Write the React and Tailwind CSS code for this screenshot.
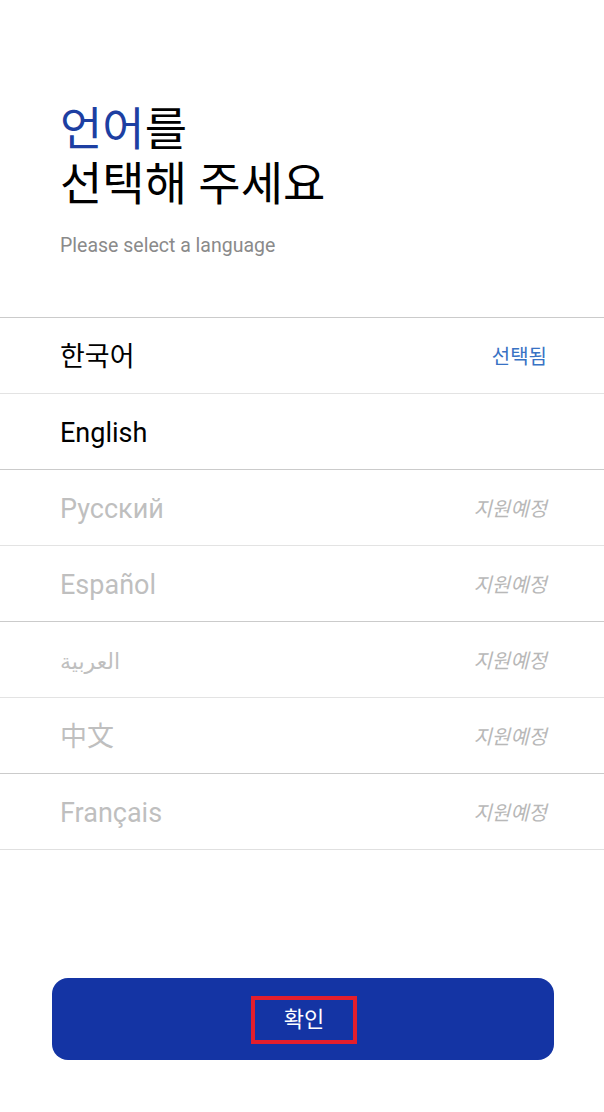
import React from "react";

const rows = [
  { label: "한국어", active: true, selected: true, top: "border-[#cbcbcb]" },
  { label: "English", active: true, top: "border-[#e3e3e3]" },
  { label: "Русский", top: "border-[#cbcbcb]" },
  { label: "Español", top: "border-[#e3e3e3]" },
  { label: "العربية", top: "border-[#cbcbcb]", small: true },
  { label: "中文", top: "border-[#e3e3e3]" },
  { label: "Français", top: "border-[#cbcbcb]" },
];

export default function App() {
  return (
    <div
      className="w-[604px] h-[1112px] bg-white flex flex-col overflow-hidden"
      style={{ fontFamily: 'Roboto, "Noto Sans CJK KR", "Noto Sans CJK SC", "DejaVu Sans", sans-serif' }}
    >
      <div className="pt-[102px] pl-[60px]">
        <h1 className="text-[46px] leading-[55px] font-normal text-black">
          <span className="text-[#1d3fa2]">언어</span>를
          <br />
          선택해 주세요
        </h1>
        <p className="mt-[22px] text-[19.5px] leading-[24px] text-[#8a8a8a]">Please select a language</p>
      </div>

      <div className="mt-[59px] flex flex-col border-b border-[#e0e0e0]">
        {rows.map((r) => (
          <div
            key={r.label}
            className={`h-[76px] border-t ${r.top} flex items-center justify-between pl-[60px] pr-[57px] pt-[3px]`}
          >
            <span
              className={`${r.small ? "text-[22px]" : "text-[27px]"} ${r.active ? "text-black" : "text-[#bfbfbf]"}`}
            >
              {r.label}
            </span>
            {r.selected ? (
              <span className="text-[20px] text-[#3872c4]">선택됨</span>
            ) : !r.active ? (
              <span className="text-[20px] italic text-[#b8b8b8]">지원예정</span>
            ) : null}
          </div>
        ))}
      </div>

      <div className="mt-[128px] ml-[52px] mr-[50px] h-[82px] rounded-[16px] bg-[#1434a4] flex items-center justify-center">
        <div className="w-[106px] h-[48px] mt-[2px] ml-[2px] border-[4px] border-[#e41e2b] flex items-center justify-center">
          <span className="text-[22px] text-white leading-none">확인</span>
        </div>
      </div>
    </div>
  );
}
